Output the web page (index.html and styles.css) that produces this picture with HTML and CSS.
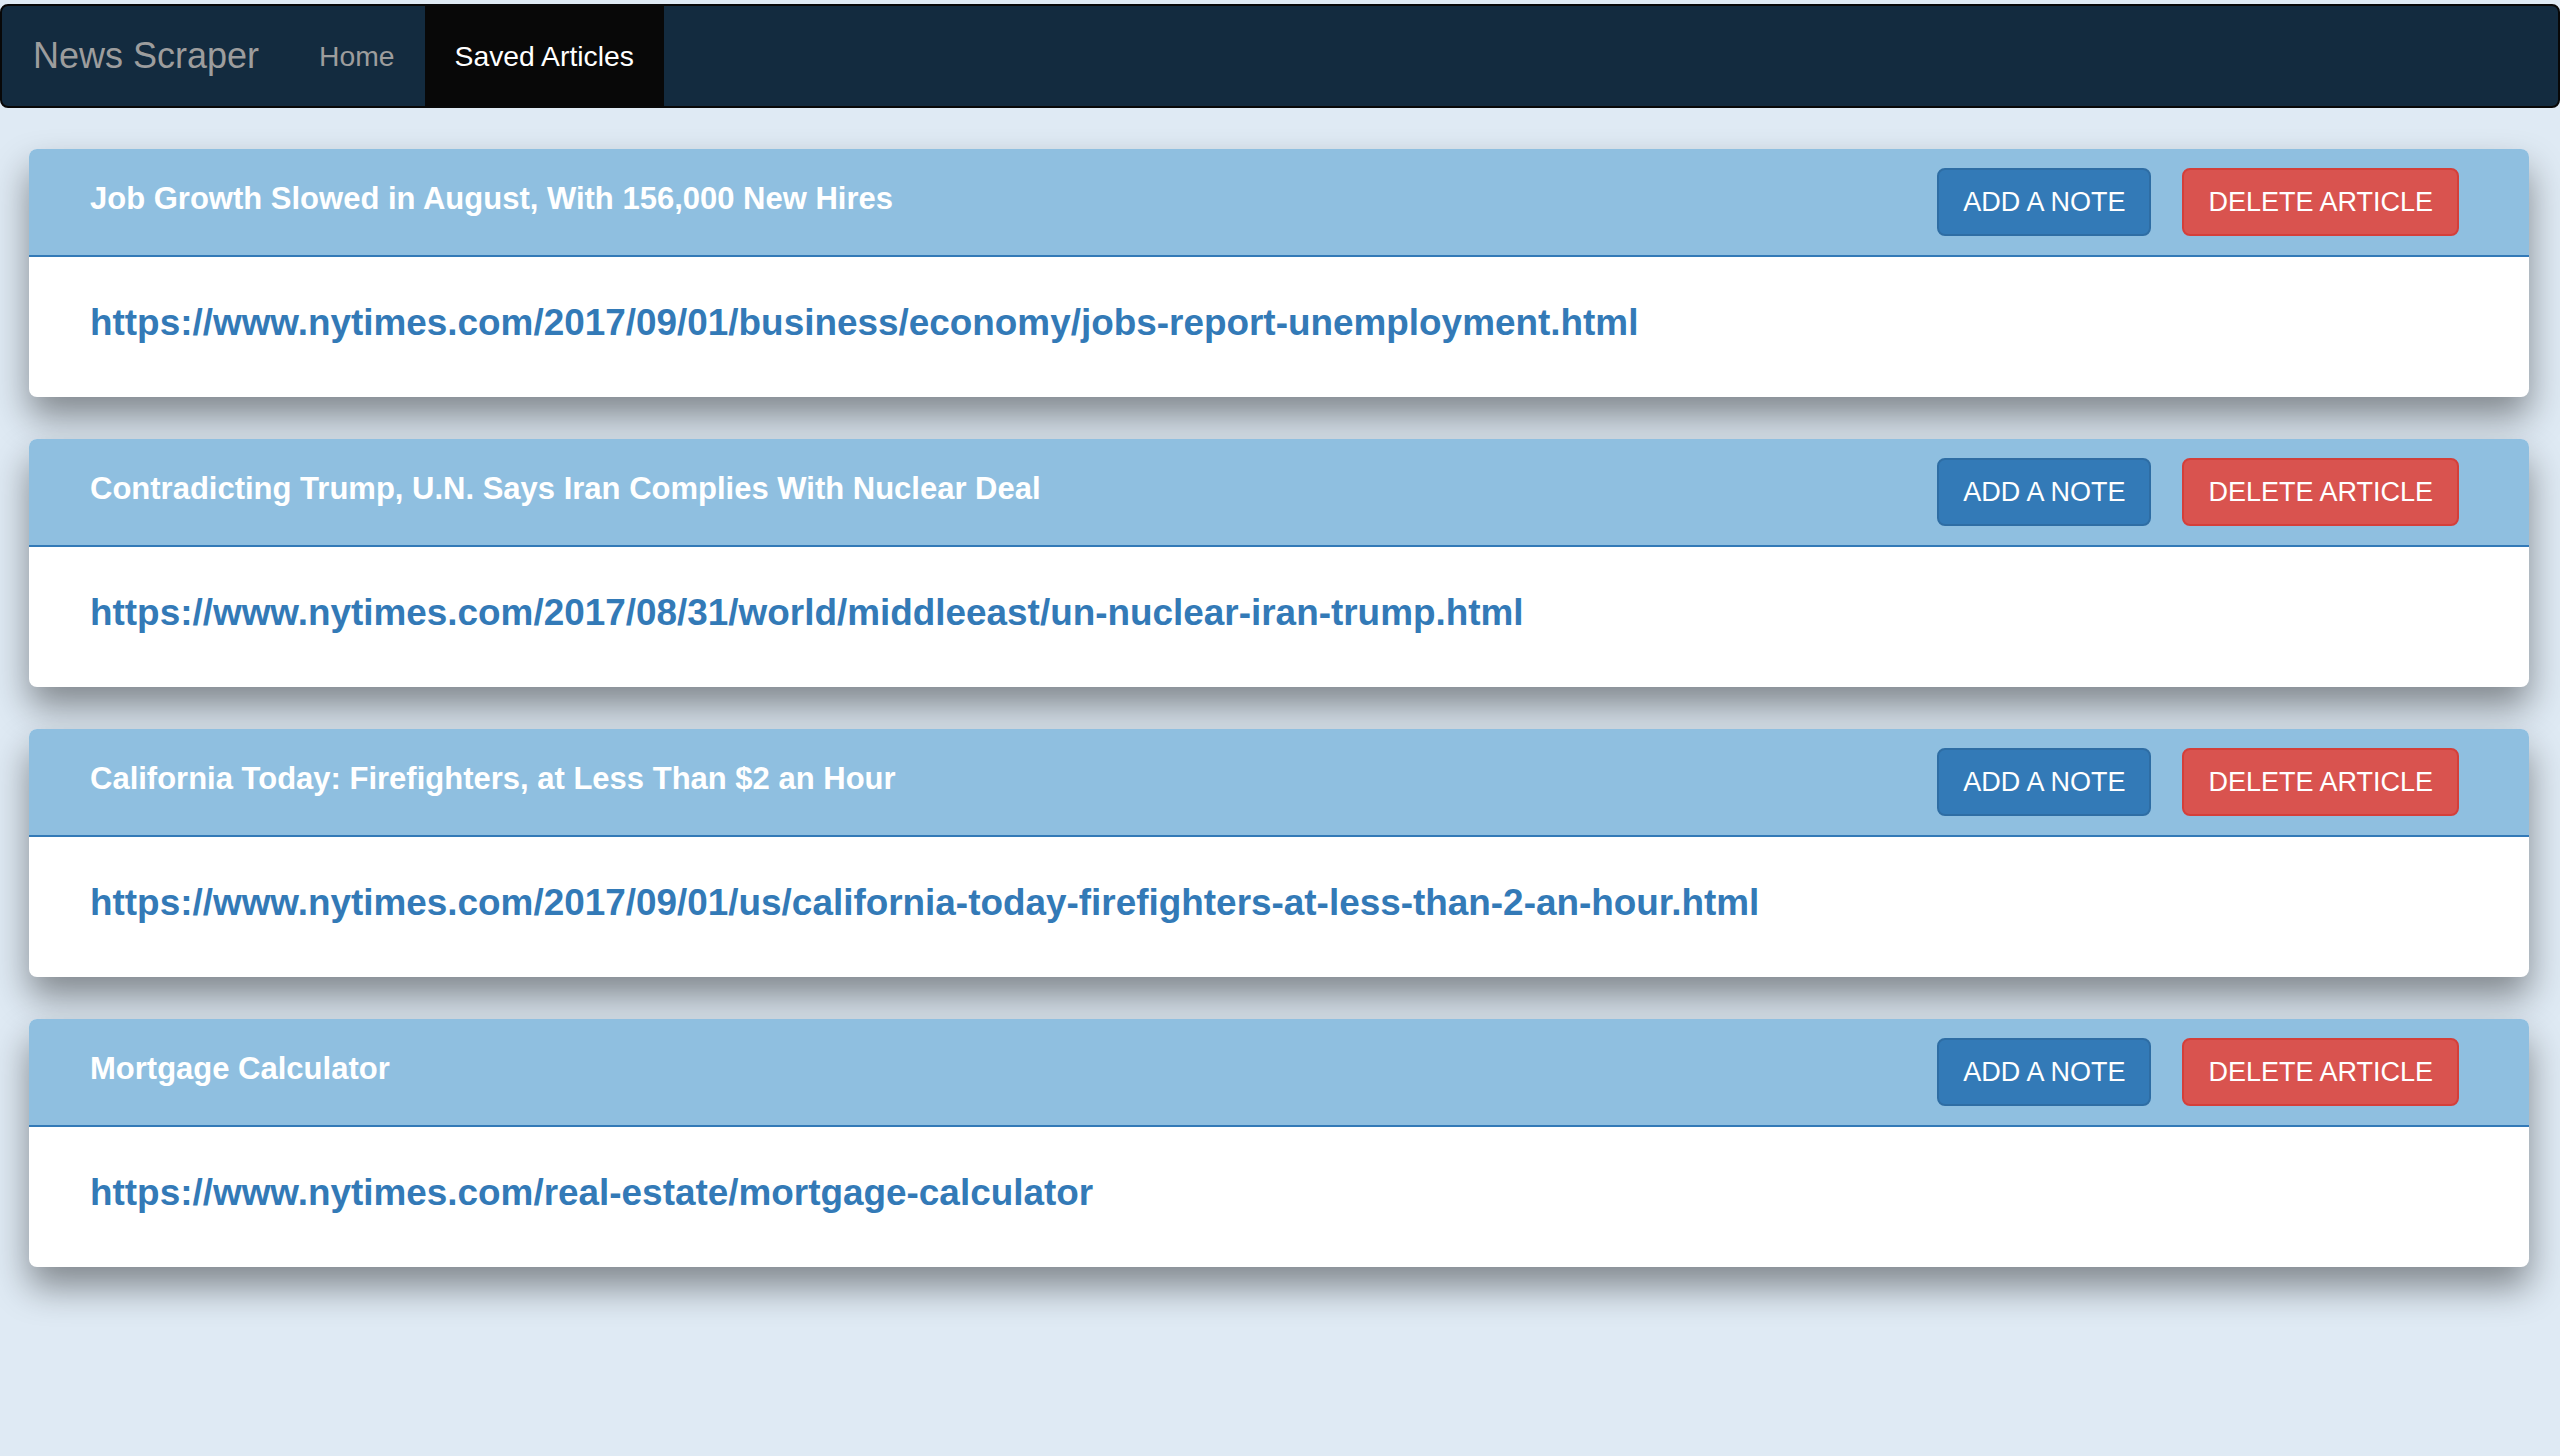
FILE: index.html
```html
<!DOCTYPE html>
<html lang="en">
<head>
<meta charset="utf-8">
<title>News Scraper - Saved Articles</title>
<link rel="stylesheet" href="styles.css">
</head>
<body>
<nav class="navbar">
  <a class="brand" href="#">News Scraper</a>
  <a class="nav-link" href="#">Home</a>
  <a class="nav-link active" href="#">Saved Articles</a>
</nav>
<main class="articles">
  <section class="card">
    <div class="card-head">
      <h3 class="title">Job Growth Slowed in August, With 156,000 New Hires</h3>
      <button class="btn btn-note">Add a Note</button>
      <button class="btn btn-delete">Delete Article</button>
    </div>
    <div class="card-body">
      <h4 class="link"><a href="#">https://www.nytimes.com/2017/09/01/business/economy/jobs-report-unemployment.html</a></h4>
    </div>
  </section>
  <section class="card">
    <div class="card-head">
      <h3 class="title">Contradicting Trump, U.N. Says Iran Complies With Nuclear Deal</h3>
      <button class="btn btn-note">Add a Note</button>
      <button class="btn btn-delete">Delete Article</button>
    </div>
    <div class="card-body">
      <h4 class="link"><a href="#">https://www.nytimes.com/2017/08/31/world/middleeast/un-nuclear-iran-trump.html</a></h4>
    </div>
  </section>
  <section class="card">
    <div class="card-head">
      <h3 class="title">California Today: Firefighters, at Less Than $2 an Hour</h3>
      <button class="btn btn-note">Add a Note</button>
      <button class="btn btn-delete">Delete Article</button>
    </div>
    <div class="card-body">
      <h4 class="link"><a href="#">https://www.nytimes.com/2017/09/01/us/california-today-firefighters-at-less-than-2-an-hour.html</a></h4>
    </div>
  </section>
  <section class="card">
    <div class="card-head">
      <h3 class="title">Mortgage Calculator</h3>
      <button class="btn btn-note">Add a Note</button>
      <button class="btn btn-delete">Delete Article</button>
    </div>
    <div class="card-body">
      <h4 class="link"><a href="#">https://www.nytimes.com/real-estate/mortgage-calculator</a></h4>
    </div>
  </section>
</main>
</body>
</html>
```
FILE: styles.css
```css
html, body {
  margin: 0;
}
body {
  padding-top: 4px;
  background: #dfeaf4;
  font-family: "Liberation Sans", Arial, Helvetica, sans-serif;
  min-height: 1452px;
}
a {
  text-decoration: none;
}
.navbar {
  box-sizing: border-box;
  height: 104px;
  display: flex;
  align-items: stretch;
  background: #132b3f;
  border: 2px solid #080808;
  border-radius: 8px;
  margin-bottom: 41px;
}
.brand {
  display: flex;
  align-items: center;
  padding: 0 30px 0 31px;
  font-size: 36px;
  color: #9d9d9d;
}
.nav-link {
  display: flex;
  align-items: center;
  padding: 0 30px;
  font-size: 28.3px;
  color: #9d9d9d;
}
.nav-link.active {
  background: #080808;
  color: #ffffff;
}
.articles {
  display: flex;
  flex-direction: column;
  gap: 42px;
  padding: 0 31px 0 29px;
}
.card {
  background: #ffffff;
  border-radius: 8px;
  box-shadow: 0 20px 36px rgba(0, 0, 0, 0.42);
}
.card-head {
  box-sizing: border-box;
  height: 108px;
  display: flex;
  align-items: center;
  padding: 0 70px 0 61px;
  background: #8fbfe0;
  border-bottom: 2px solid #337ab7;
  border-radius: 8px 8px 0 0;
}
.title {
  flex: 1;
  margin: 0;
  padding-bottom: 7px;
  font-size: 31px;
  font-weight: bold;
  color: #ffffff;
}
.btn {
  box-sizing: border-box;
  height: 68px;
  padding: 0 24px;
  border: 2px solid;
  border-radius: 8px;
  font-family: inherit;
  font-size: 27px;
  text-transform: uppercase;
  color: #ffffff;
  cursor: pointer;
}
.btn-note {
  background: #337ab7;
  border-color: #2e6da4;
  margin-right: 31px;
}
.btn-delete {
  background: #d9534f;
  border-color: #d43f3a;
}
.card-body {
  box-sizing: border-box;
  height: 140px;
  padding: 0 61px;
  display: flex;
  align-items: flex-start;
}
.link {
  margin: 46px 0 0;
  line-height: 40px;
  font-size: 36.9px;
  font-weight: bold;
}
.link a {
  color: #337ab7;
}
```
